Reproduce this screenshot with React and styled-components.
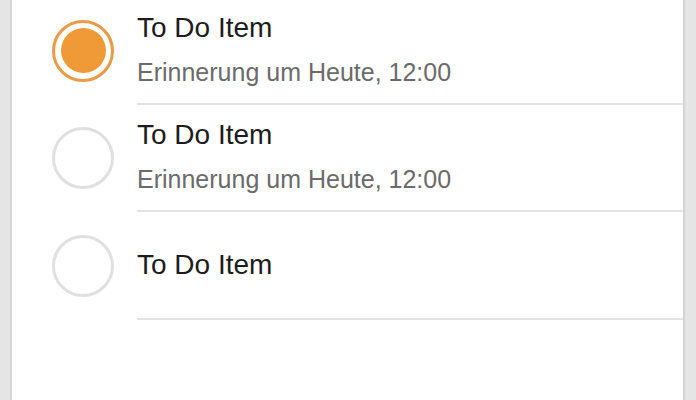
import React from 'react';
import styled, { createGlobalStyle } from 'styled-components';

const GlobalStyle = createGlobalStyle`
  html, body {
    margin: 0;
    padding: 0;
    background: #e5e5e5;
    font-family: "Liberation Sans", Arial, sans-serif;
    overflow: hidden;
  }
`;

const Panel = styled.main`
  margin: 0 11px 0 10px;
  min-height: 100vh;
  background: #fff;
  border-left: 2px solid #d3d3d3;
  border-right: 2px solid #d3d3d3;
  overflow: hidden;
`;

const List = styled.ul`
  list-style: none;
  margin: -3px 0 0;
  padding: 0;
`;

const Row = styled.li`
  display: flex;
  align-items: center;
`;

const RadioCell = styled.div`
  padding: 0 23px 0 40px;
  display: flex;
  align-items: center;
`;

const Radio = styled.span`
  box-sizing: border-box;
  width: 62px;
  height: 62px;
  border-radius: 50%;
  border: 3px solid ${(p) => (p.checked ? '#e99b45' : '#e0e0e0')};
  display: flex;
  align-items: center;
  justify-content: center;

  &::after {
    content: '';
    display: ${(p) => (p.checked ? 'block' : 'none')};
    width: 45px;
    height: 45px;
    border-radius: 50%;
    background: #ef9a36;
  }
`;

const Body = styled.div`
  flex: 1;
  height: 105.5px;
  border-bottom: 2px solid #e3e3e3;
  display: flex;
  flex-direction: column;
  justify-content: center;
`;

const Title = styled.div`
  font-size: 28px;
  line-height: 32px;
  color: #1c1c1c;
`;

const Reminder = styled.div`
  margin-top: 12px;
  font-size: 25px;
  line-height: 32px;
  color: #6b6b6b;
`;

const items = [
  { title: 'To Do Item', reminder: 'Erinnerung um Heute, 12:00', done: true },
  { title: 'To Do Item', reminder: 'Erinnerung um Heute, 12:00', done: false },
  { title: 'To Do Item', done: false },
];

const App = () => {
  return (
    <>
      <GlobalStyle />
      <Panel>
        <List>
          {items.map((item, i) => (
            <Row key={i}>
              <RadioCell>
                <Radio checked={item.done} />
              </RadioCell>
              <Body>
                <Title>{item.title}</Title>
                {item.reminder && <Reminder>{item.reminder}</Reminder>}
              </Body>
            </Row>
          ))}
        </List>
      </Panel>
    </>
  );
};

export default App;
